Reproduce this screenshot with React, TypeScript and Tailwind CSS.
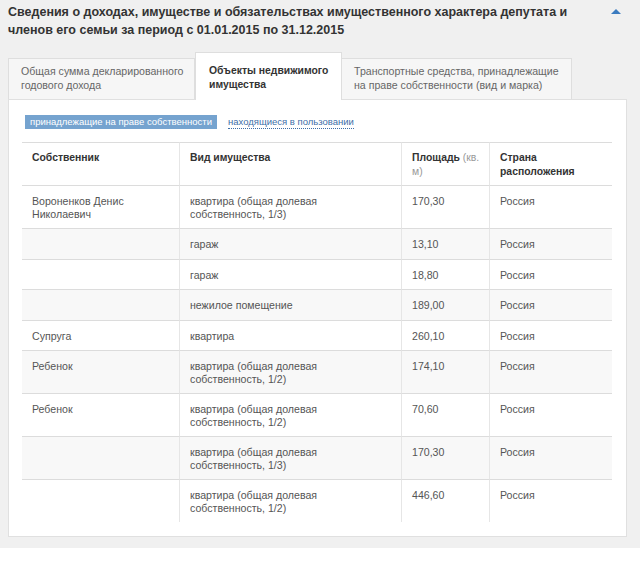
import React from "react";

type Row = { owner: React.ReactNode; type: React.ReactNode; area: string };

const dolya = (f: string) => (
  <>
    квартира (общая долевая
    <br />
    собственность, {f})
  </>
);

const rows: Row[] = [
  {
    owner: (
      <>
        Вороненков Денис
        <br />
        Николаевич
      </>
    ),
    type: dolya("1/3"),
    area: "170,30",
  },
  { owner: "", type: "гараж", area: "13,10" },
  { owner: "", type: "гараж", area: "18,80" },
  { owner: "", type: "нежилое помещение", area: "189,00" },
  { owner: "Супруга", type: "квартира", area: "260,10" },
  { owner: "Ребенок", type: dolya("1/2"), area: "174,10" },
  { owner: "Ребенок", type: dolya("1/2"), area: "70,60" },
  { owner: "", type: dolya("1/3"), area: "170,30" },
  { owner: "", type: dolya("1/2"), area: "446,60" },
];

export default function App() {
  return (
    <div
      className="w-[640px] h-[548px] bg-[#f0f0f0] pl-2 pt-[3px]"
      style={{ fontFamily: '"Liberation Sans", Arial, sans-serif' }}
    >
      <div className="flex items-start w-[624px]">
        <div className="text-[12.5px] font-bold leading-[18px] text-[#333] whitespace-nowrap flex-1">
          Сведения о доходах, имуществе и обязательствах имущественного характера депутата и
          <br />
          членов его семьи за период с 01.01.2015 по 31.12.2015
        </div>
        <div className="mt-[6px] mr-[11px] w-0 h-0 border-l-[5px] border-r-[5px] border-b-[5px] border-l-transparent border-r-transparent border-b-[#3b7bbf]" />
      </div>

      <div className="flex items-end mt-[13px] text-[10.6px] leading-[14px] relative z-10">
        <div className="w-[187px] h-[41px] bg-[#f6f6f6] border border-[#dedede] border-b-0 px-3 pb-[7px] flex flex-col justify-end text-[#666] whitespace-nowrap">
          Общая сумма декларированного
          <br />
          годового дохода
        </div>
        <div className="w-[147px] h-[48px] -mb-px bg-white border border-[#dedede] border-b-0 pl-[13px] pb-[8px] flex flex-col justify-end text-[#333] font-bold text-[10.4px] whitespace-nowrap">
          <span>
            Объекты недвижимого
            <br />
            имущества
          </span>
        </div>
        <div className="w-[230px] h-[41px] bg-[#f6f6f6] border border-[#dedede] border-b-0 border-l-0 px-3 pb-[7px] flex flex-col justify-end text-[#666] whitespace-nowrap">
          Транспортные средства, принадлежащие
          <br />
          на праве собственности (вид и марка)
        </div>
      </div>

      <div className="w-[619px] h-[438px] bg-white border border-[#e0e0e0] pt-[15px] px-[13px]">
        <div className="flex items-center text-[9.5px] leading-[14px] pl-[3px]">
          <span className="bg-[#75a3cf] text-white px-[5px] h-[14px] leading-[14px]">
            принадлежащие на праве собственности
          </span>
          <span className="ml-[11px] text-[#3d6ea8] border-b border-dotted border-[#3d6ea8] leading-[13px]">
            находящиеся в пользовании
          </span>
        </div>

        <table className="mt-[13px] w-[590px] table-fixed border-separate border-spacing-0 text-[10.6px]">
          <colgroup>
            <col className="w-[157px]" />
            <col className="w-[222px]" />
            <col className="w-[88px]" />
            <col className="w-[123px]" />
          </colgroup>
          <thead>
            <tr className="text-left align-top text-[#333] leading-[14px] text-[10.4px]">
              <th className="font-bold border-t border-b border-[#dcdcdc] pl-[10px] pt-[8px] pb-[6px]">
                Собственник
              </th>
              <th className="font-bold border-t border-b border-l border-[#dcdcdc] border-l-[#e6e6e6] pl-[10px] pt-[8px] pb-[6px]">
                Вид имущества
              </th>
              <th className="font-bold border-t border-b border-l border-[#dcdcdc] border-l-[#e6e6e6] pl-[10px] pt-[8px] pb-[6px] whitespace-nowrap">
                Площадь <span className="font-normal text-[#999]">(кв.</span>
                <br />
                <span className="font-normal text-[#999]">м)</span>
              </th>
              <th className="font-bold border-t border-b border-l border-[#dcdcdc] border-l-[#e6e6e6] pl-[10px] pt-[8px] pb-[6px]">
                Страна
                <br />
                расположения
              </th>
            </tr>
          </thead>
          <tbody>
            {rows.map((r, i) => {
              const last = i === rows.length - 1;
              const bg = i % 2 === 1 ? "bg-[#f8f8f8]" : "bg-white";
              const bb = last ? "" : "border-b border-b-[#dcdcdc]";
              return (
                <tr key={i} className={`${bg} align-top text-[#555] leading-[12.5px]`}>
                  <td className={`${bb} pl-[10px] pt-[9px] pb-[8px] whitespace-nowrap`}>{r.owner}</td>
                  <td className={`${bb} border-l border-l-[#e6e6e6] pl-[10px] pt-[9px] pb-[8px] whitespace-nowrap`}>
                    {r.type}
                  </td>
                  <td className={`${bb} border-l border-l-[#e6e6e6] pl-[10px] pt-[9px] pb-[8px]`}>{r.area}</td>
                  <td className={`${bb} border-l border-l-[#e6e6e6] pl-[10px] pt-[9px] pb-[8px]`}>Россия</td>
                </tr>
              );
            })}
          </tbody>
        </table>
      </div>
    </div>
  );
}
